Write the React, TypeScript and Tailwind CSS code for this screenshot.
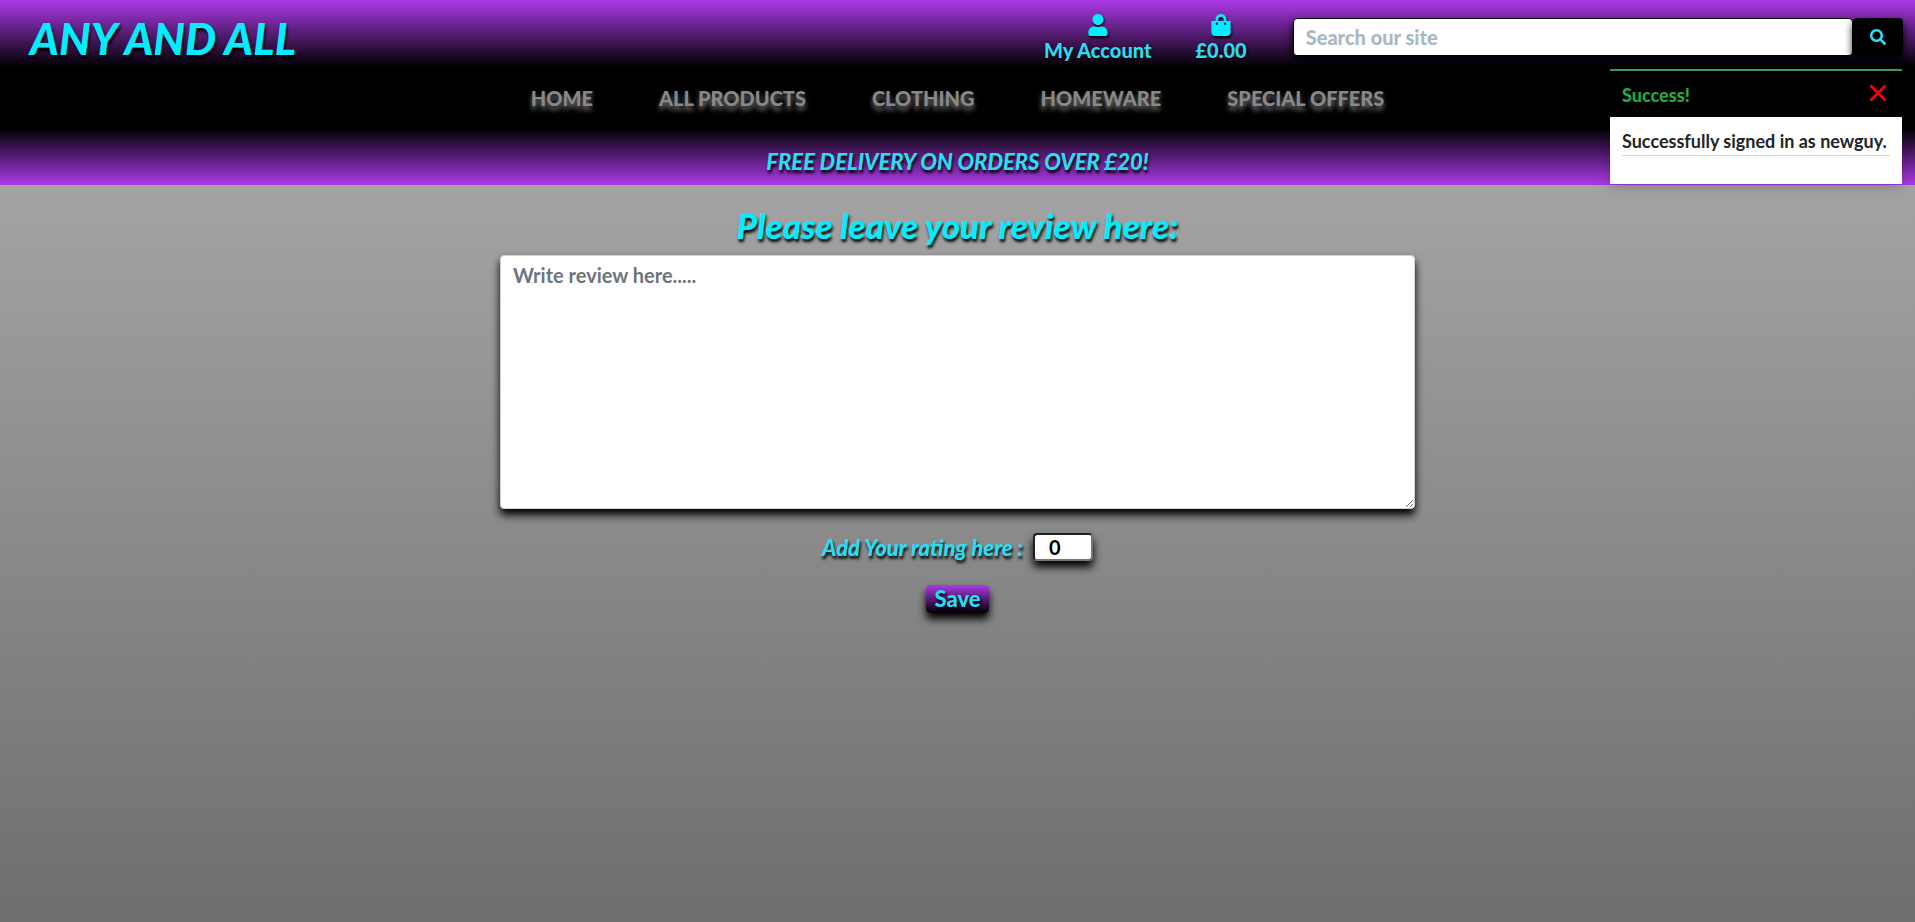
import React from "react";
import { FaUser, FaShoppingBag, FaSearch } from "react-icons/fa";

const navLinks = ["HOME", "ALL PRODUCTS", "CLOTHING", "HOMEWARE", "SPECIAL OFFERS"];

function Header() {
  return (
    <header className="bg-black">
      <div className="grid h-[67px] grid-cols-3 bg-linear-to-b/srgb from-[#ac39e8] to-black">
        <a
          href="#home"
          className="self-center pt-2 pl-[30px] text-[44px] leading-none font-black whitespace-nowrap text-[#00eeff] italic [text-shadow:1px_3px_3px_black]"
        >
          ANY AND ALL
        </a>
        <div className="flex items-start justify-end gap-11 pt-3.5 pr-[30px] text-xl leading-6 font-black text-[#2bdcf5]">
          <a href="#account" className="flex flex-col items-center gap-0.5">
            <FaUser className="size-[22px] text-[#00eeff] drop-shadow-[1px_2px_1px_black]" />
            <span className="[text-shadow:1px_2px_3px_black]">My Account</span>
          </a>
          <a href="#bag" className="flex flex-col items-center gap-0.5">
            <FaShoppingBag className="size-[22px] text-[#00eeff] drop-shadow-[1px_2px_1px_black]" />
            <span className="[text-shadow:1px_2px_3px_black]">£0.00</span>
          </a>
        </div>
        <form className="flex items-start pt-[18px] pr-3 pl-4" onSubmit={(e) => e.preventDefault()}>
          <input
            type="text"
            aria-label="Search our site"
            placeholder="Search our site"
            className="h-[38px] min-w-0 flex-1 rounded border border-black bg-white px-3 text-xl font-black text-gray-800 shadow-[0_5px_9px_black] outline-none placeholder:text-[#aab7c4]"
          />
          <button
            type="submit"
            aria-label="Search"
            className="flex h-[38px] w-[50px] items-center justify-center rounded bg-black text-[#2bdcf5] shadow-[0_5px_9px_black]"
          >
            <FaSearch className="size-4" />
          </button>
        </form>
      </div>
      <nav className="flex h-[61px] justify-center gap-[66px] text-xl leading-[62px] font-black text-[#888] [text-shadow:0_4px_5px_#777]">
        {navLinks.map((label) => (
          <a key={label} href="#products">
            {label}
          </a>
        ))}
      </nav>
      <p className="h-[57px] bg-linear-to-b/srgb from-black to-[#ac39e8] pt-5 text-center text-[22px] leading-7 font-black text-[#2bdcf5] italic [text-shadow:1px_3px_3px_black]">
        FREE DELIVERY ON ORDERS OVER £20!
      </p>
    </header>
  );
}

function Toast() {
  return (
    <div
      role="status"
      className="absolute top-[69px] right-[13px] w-[292px] bg-white shadow-[0_4px_12px_rgba(0,0,0,0.2)]"
    >
      <div className="flex h-12 items-center justify-between border-t-2 border-[#3f9a55] bg-black pr-[15px] pl-3">
        <strong className="pt-0.5 text-lg leading-6 font-black text-[#28a745]">Success!</strong>
        <button type="button" aria-label="Close" className="pb-0.5 text-[#f00]">
          <svg viewBox="0 0 16 16" className="size-[18px]" fill="none" stroke="currentColor" strokeWidth="2.5" strokeLinecap="round">
            <path d="M2 2 14 14M14 2 2 14" />
          </svg>
        </button>
      </div>
      <div className="h-[67px] px-3 pt-3">
        <p className="border-b border-gray-300 pb-0.5 text-lg leading-6 font-bold whitespace-nowrap text-[#212529]">
          Successfully signed in as newguy.
        </p>
      </div>
    </div>
  );
}

function ReviewForm() {
  return (
    <form className="flex flex-col items-center pt-5" onSubmit={(e) => e.preventDefault()}>
      <h1 className="mb-2.5 text-[35px] leading-10 font-black text-[#00eeff] italic [text-shadow:1px_3px_3px_black]">
        <label htmlFor="review">Please leave your review here:</label>
      </h1>
      <textarea
        id="review"
        placeholder="Write review here....."
        className="h-[254px] w-[915px] max-w-full resize rounded border border-[#ced4da] bg-white px-3 py-1.5 text-xl leading-[26px] font-bold text-gray-800 shadow-[0_6px_9px_black] outline-none placeholder:text-[#6c757d]"
      />
      <div className="mt-6 flex h-7 items-center gap-2.5 text-[22px] font-black">
        <label htmlFor="rating" className="text-[#2bdcf5] italic [text-shadow:1px_3px_3px_black]">
          Add Your rating here :
        </label>
        <input
          id="rating"
          type="number"
          min={0}
          max={5}
          defaultValue={0}
          className="h-7 w-[60px] rounded border-2 border-[#767676] border-t-[#222] border-l-[#222] bg-white pl-3.5 text-xl font-bold text-black shadow-[0_6px_9px_black] outline-none"
        />
      </div>
      <button
        type="submit"
        className="mt-6 h-7 rounded bg-linear-to-b/srgb from-[#ac39e8] to-black px-2 text-[22px] leading-6 font-black text-[#2bdcf5] shadow-[0_6px_9px_black] [text-shadow:1px_2px_3px_black]"
      >
        Save
      </button>
    </form>
  );
}

export default function App() {
  return (
    <div className="relative min-h-screen bg-linear-to-b/srgb from-[#b1b1b1] to-[#6e6e6e] font-['Lato',sans-serif]">
      <Header />
      <Toast />
      <main>
        <ReviewForm />
      </main>
    </div>
  );
}
